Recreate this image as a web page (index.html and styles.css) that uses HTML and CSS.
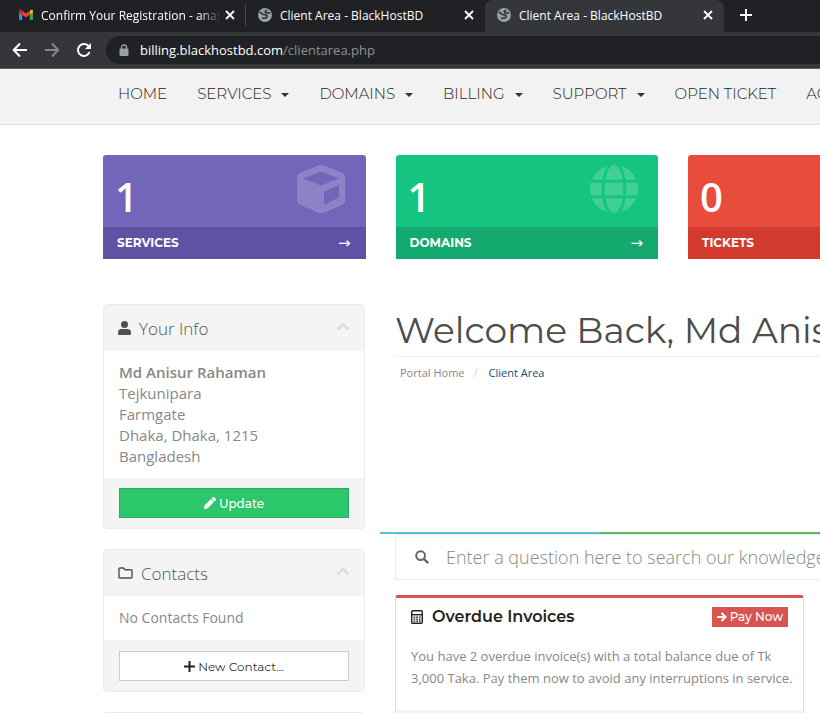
FILE: index.html
```html
<!DOCTYPE html>
<html lang="en">
<head>
<meta charset="utf-8">
<title>Client Area - BlackHostBD</title>
<link rel="stylesheet" href="styles.css">
</head>
<body>
<svg class="defs" aria-hidden="true">
  <symbol id="globe" viewBox="0 0 16 16"><circle cx="8" cy="8" r="7" fill="#9aa0a6"/><path d="M2.500 5.500C4 5 4.600 5.800 5.200 6.800c.6 1 1.500 1 2.600 1 1.400 0 2.200.5 2.200 1.500 0 1.300-1.400 1.900-2.500 1.900H5M13 5.500c-1 .7-2 .5-2.800.5C8.600 6 8 5.400 8.300 4.400 8.500 3.700 9.300 3.700 10 3" fill="none" stroke="#303135" stroke-width="1.600"/></symbol>
  <symbol id="close" viewBox="0 0 10 10"><path d="m1 1 8 8m0-8-8 8" fill="none" stroke="currentColor" stroke-width="1.800"/></symbol>
  <symbol id="chevron" viewBox="0 0 14 9"><path d="m1.500 7.500 5.500-5.500 5.500 5.500" fill="none" stroke="#dcdcdc" stroke-width="2.600"/></symbol>
</svg>

<div class="browser">
  <div class="tabs">
    <div class="tab tab-first">
      <svg class="favicon" viewBox="0 0 16 16"><path d="M1 4.500V12c0 .6.4 1 1 1h2.200V7.500z" fill="#4285f4"/><path d="M15 4.500V12c0 .6-.4 1-1 1h-2.200V7.500z" fill="#34a853"/><path d="M11.800 3.700v4l3.200-2.400V4c0-1.200-1.300-1.700-2.200-1z" fill="#fbbc04"/><path d="M1 5.300V4c0-1.200 1.300-1.700 2.200-1L8 6.600 11.800 3.700v4L8 10.600 4.200 7.700z" fill="#ea4335"/><path d="M1 5.300V4c0-1 .9-1.500 1.700-1.300L4.200 3.700v4z" fill="#c5221f"/></svg>
      <span class="tab-title fade">Confirm Your Registration - anasbd</span>
      <button class="icon-btn" aria-label="Close tab"><svg width="10" height="10"><use href="#close"/></svg></button>
    </div>
    <div class="tab">
      <svg class="favicon"><use href="#globe"/></svg>
      <span class="tab-title">Client Area - BlackHostBD</span>
      <button class="icon-btn" aria-label="Close tab"><svg width="10" height="10"><use href="#close"/></svg></button>
    </div>
    <div class="tab active">
      <svg class="favicon"><use href="#globe"/></svg>
      <span class="tab-title">Client Area - BlackHostBD</span>
      <button class="icon-btn" aria-label="Close tab"><svg width="10" height="10"><use href="#close"/></svg></button>
    </div>
    <button class="icon-btn new-tab" aria-label="New tab"><svg width="12" height="12" viewBox="0 0 12 12"><path d="M6 0v12M0 6h12" stroke="currentColor" stroke-width="2"/></svg></button>
  </div>
  <div class="toolbar">
    <button class="icon-btn" aria-label="Back"><svg width="16" height="16" viewBox="0 0 16 16"><path d="M15 8H2M8 1.500 1.700 8 8 14.500" fill="none" stroke="#fff" stroke-width="2"/></svg></button>
    <button class="icon-btn" aria-label="Forward"><svg width="16" height="16" viewBox="0 0 16 16"><path d="M1 8h13M8 1.500 14.300 8 8 14.500" fill="none" stroke="#85868a" stroke-width="2"/></svg></button>
    <button class="icon-btn" aria-label="Reload"><svg width="16" height="16" viewBox="0 0 16 16"><path d="M13.500 10.200A6 6 0 1 1 12.200 3.700L14 5.500" fill="none" stroke="#fff" stroke-width="2"/><path d="M15 1v6H9z" fill="#fff"/></svg></button>
    <div class="omnibox">
      <svg width="10" height="13" viewBox="0 0 10 13"><path d="M2.500 6V3.500a2.500 2.500 0 0 1 5 0V6" fill="none" stroke="#9aa0a6" stroke-width="1.400"/><rect x="0.500" y="4.500" width="9" height="7.500" rx="1" fill="#9aa0a6"/></svg>
      <span class="url"><b>billing.blackhostbd.com</b>/clientarea.php</span>
    </div>
  </div>
</div>

<nav class="site-nav">
  <a href="#">HOME</a>
  <a href="#" class="drop">SERVICES</a>
  <a href="#" class="drop">DOMAINS</a>
  <a href="#" class="drop">BILLING</a>
  <a href="#" class="drop">SUPPORT</a>
  <a href="#">OPEN TICKET</a>
  <a href="#">ACCOUNT</a>
</nav>

<div class="container">
  <section class="tiles">
    <a href="#" class="tile services">
      <span class="tile-top"><strong>1</strong>
        <svg width="50" height="50" viewBox="0 0 50 50"><path fill-rule="evenodd" d="M22.500 1.500a7 7 0 0 1 5 0l18 7Q49 10 49 13.500V36q0 3.500-3 5L28 48.500a7 7 0 0 1-6 0L4 41q-3-1.500-3-5V13.500Q1 10 4.500 8.500zM25 7.500 7 14.500 25 21.500 43 14.500zM28 27.500V41L43 33.500V21z"/></svg></span>
      <span class="tile-label">SERVICES<i>→</i></span>
    </a>
    <a href="#" class="tile domains">
      <span class="tile-top"><strong>1</strong>
        <svg width="48" height="50" viewBox="0 0 496 512"><path d="M336.500 160C322 70.700 287.800 8 248 8s-74 62.700-88.500 152h177zM152 256c0 22.200 1.200 43.500 3.300 64h185.300c2.100-20.500 3.300-41.800 3.300-64s-1.200-43.500-3.300-64H155.300c-2.100 20.500-3.300 41.800-3.300 64zm324.700-96c-28.600-67.900-86.500-120.400-158-141.600 24.400 33.800 41.200 84.700 50 141.600h108zM177.200 18.400C105.800 39.600 47.800 92.100 19.300 160h108c8.700-56.900 25.500-107.800 49.900-141.600zM487.400 192H372.700c2.100 21 3.300 42.500 3.300 64s-1.200 43-3.300 64h114.600c5.500-20.500 8.600-41.800 8.600-64s-3.100-43.500-8.500-64zM120 256c0-21.500 1.200-43 3.300-64H8.600C3.200 212.500 0 233.800 0 256s3.200 43.500 8.600 64h114.600c-2-21-3.200-42.500-3.200-64zm39.500 96c14.500 89.300 48.700 152 88.500 152s74-62.700 88.500-152h-177zm159.300 141.600c71.400-21.200 129.400-73.700 158-141.600h-108c-8.800 56.900-25.600 107.800-50 141.600zM19.300 352c28.600 67.900 86.500 120.400 158 141.600-24.400-33.800-41.200-84.700-50-141.600h-108z"/></svg></span>
      <span class="tile-label">DOMAINS<i>→</i></span>
    </a>
    <a href="#" class="tile tickets">
      <span class="tile-top"><strong>0</strong></span>
      <span class="tile-label">TICKETS</span>
    </a>
  </section>

  <div class="columns">
    <aside class="sidebar">
      <section class="panel">
        <h3><svg width="13" height="14" viewBox="0 0 13 14"><circle cx="6.500" cy="3.500" r="3.500" fill="#4d4f50"/><path d="M0 13v-1.500Q0 8 3.500 8h6Q13 8 13 11.500V13q0 1-1 1H1q-1 0-1-1z" fill="#4d4f50"/></svg>Your Info<svg class="chev" width="14" height="9"><use href="#chevron"/></svg></h3>
        <address class="panel-body"><strong>Md Anisur Rahaman</strong><br>Tejkunipara<br>Farmgate<br>Dhaka, Dhaka, 1215<br>Bangladesh</address>
        <div class="panel-foot"><button class="btn update"><svg width="12" height="12" viewBox="0 0 512 512"><path fill="#fff" d="M497.900 142.100l-46.100 46.100c-4.700 4.700-12.300 4.700-17 0l-111-111c-4.700-4.700-4.700-12.300 0-17l46.100-46.100c18.700-18.700 49.100-18.700 67.900 0l60.100 60.100c18.800 18.700 18.800 49.100 0 67.900zM284.200 99.800L21.600 362.400.4 483.900c-2.900 16.400 11.400 30.600 27.800 27.800l121.500-21.300 262.600-262.600c4.700-4.700 4.700-12.300 0-17l-111-111c-4.800-4.700-12.400-4.700-17.100 0z"/></svg>Update</button></div>
      </section>
      <section class="panel">
        <h3><svg width="15" height="12" viewBox="0 0 15 12"><path d="M1 2q0-1 1-1h3.500L7 2.700h6q1 0 1 1V10q0 1-1 1H2q-1 0-1-1z" fill="none" stroke="#4d4f50" stroke-width="1.400"/></svg>Contacts<svg class="chev" width="14" height="9"><use href="#chevron"/></svg></h3>
        <div class="panel-body short">No Contacts Found</div>
        <div class="panel-foot"><button class="btn contact"><svg width="11" height="11" viewBox="0 0 11 11"><path d="M5.500 0v11M0 5.500h11" stroke="#222" stroke-width="2"/></svg>New Contact...</button></div>
      </section>
      <section class="panel"><h3></h3></section>
    </aside>

    <main>
      <h1>Welcome Back, Md Anisur</h1>
      <ol class="crumbs"><li><a href="#">Portal Home</a></li><li><a href="#" class="current">Client Area</a></li></ol>
      <div class="stripe"><span></span><span></span><span></span><span></span></div>
      <label class="search">
        <svg width="14" height="14" viewBox="0 0 14 14"><circle cx="5.600" cy="5.600" r="4.400" fill="none" stroke="#666" stroke-width="2"/><path d="m9 9 4.200 4.200" stroke="#666" stroke-width="2.400"/></svg>
        <input type="text" aria-label="Search" placeholder="Enter a question here to search our knowledgebase for answers...">
      </label>
      <div class="cards">
        <section class="card">
          <header>
            <svg width="12" height="14" viewBox="0 0 12 14"><rect x="0.700" y="0.700" width="10.600" height="12.600" rx="1" fill="none" stroke="#222" stroke-width="1.400"/><path d="M1 4.700h10" stroke="#222" stroke-width="1.400"/><path d="M2.500 7.200h1.800m.9 0H7m.9 0h1.800M2.500 9.200h1.800m.9 0H7M2.500 11.200h1.800m.9 0H7m1.800-2.700v3.400" stroke="#222" stroke-width="1.200"/></svg>
            <h2>Overdue Invoices</h2>
            <a href="#" class="pay"><svg width="10" height="10" viewBox="0 0 10 10"><path d="M0 5h8M4.500 1 8.600 5 4.500 9" fill="none" stroke="#fff" stroke-width="2"/></svg>Pay Now</a>
          </header>
          <p>You have 2 overdue invoice(s) with a total balance due of Tk 3,000 Taka. Pay them now to avoid any interruptions in service.</p>
          <footer></footer>
        </section>
      </div>
    </main>
  </div>
</div>
</body>
</html>
```
FILE: styles.css
```css
* { box-sizing: border-box; }
body {
  margin: 0;
  overflow: hidden;
  background: #fff;
  color: #888;
  font-family: "Open Sans", sans-serif;
  font-size: 15px;
}
a { color: inherit; text-decoration: none; }
button { font: inherit; cursor: pointer; }
svg { flex: none; }
.defs { display: none; }

/* browser chrome */
.browser { background: #35363a; border-bottom: 1px solid #5c5d60; }
.tabs { display: flex; height: 32px; background: #202124; color: #fff; font-size: 12px; }
.tab { display: flex; align-items: center; flex: 0 0 239px; min-width: 0; padding: 0 11px 2px 11px; }
.tab-first { flex-basis: 246px; padding: 0 10px 2px 18px; border-right: 1px solid #4a4c50; border-image: linear-gradient(transparent 5px, #4a4c50 5px 25px, transparent 25px) 1; }
.tab.active { background: #35363a; border-radius: 8px 8px 0 0; }
.favicon { width: 16px; height: 16px; margin-right: 7px; }
.tab-title { flex: 1; min-width: 0; overflow: hidden; white-space: nowrap; }
.tab-title.fade { margin-right: 4px; mask-image: linear-gradient(to right, #000 88%, transparent); }
.icon-btn { display: flex; align-items: center; justify-content: center; padding: 0; border: 0; background: none; color: #fff; }
.new-tab { margin-left: 16px; padding-bottom: 2px; }
.toolbar { display: flex; align-items: center; gap: 16px; height: 36px; padding-left: 12px; }
.omnibox {
  display: flex; align-items: center; gap: 11px; flex: 1;
  height: 28px; margin-left: -2px; padding-left: 13px;
  border-radius: 14px 0 0 14px; background: #202124;
}
.url { color: #8e9196; font-size: 13px; }
.url b { color: #fff; font-weight: 400; }

/* site navigation */
.site-nav {
  display: flex; align-items: flex-start; gap: 30px; height: 56px; padding: 14px 0 0 118px;
  background: #f2f2f2; border-bottom: 1px solid #ddd; color: #222;
  font: 300 15px/22px Montserrat, Inter, sans-serif; white-space: nowrap;
}
.drop { display: flex; align-items: center; }
.drop::after { content: ""; margin: 2px 0 0 10px; border: 4px solid transparent; border-top-color: #333; border-bottom: 0; }

/* page */
.container { min-width: 1243px; padding: 30px 0 0 103px; }
.tiles { display: grid; grid-template-columns: repeat(4, 1fr); gap: 30px; }
.tile { border-radius: 3px 3px 0 0; overflow: hidden; color: #fff; }
.tile-top { display: flex; justify-content: space-between; height: 72px; padding: 9px 20px 0 12px; }
.tile-top strong { padding-top: 6px; font-size: 40px; font-weight: 600; line-height: 54px; }
.tile-top svg { fill: #fff; opacity: .19; }
.tile-label { display: flex; justify-content: space-between; padding: 0 15px 0 14px; font: 700 12px/32px Montserrat, Inter, sans-serif; }
.tile-label i { font: 400 15px/32px "DejaVu Sans", sans-serif; }
.services { background: #7266ba; }
.services .tile-label { background: #5e52a4; }
.domains { background: #15c480; }
.domains .tile-label { background: #13a96f; }
.tickets { background: #e84c3d; }
.tickets .tile-label { background: #d23a2d; }

.columns { display: grid; grid-template-columns: 262px 1fr; gap: 30px; margin-top: 45px; }
.panel { margin-bottom: 20px; border: 1px solid #eaeaea; border-radius: 4px; }
.panel h3 {
  display: flex; align-items: center; gap: 8px; height: 46px; margin: 0; padding: 0 14px;
  background: #f4f4f4; color: #555; font-size: 17px; font-weight: 300;
}
.chev { margin: 0 0 3px auto; }
.panel-body { padding: 11px 15px; font-size: 15px; font-style: normal; line-height: 21px; }
.panel-body strong { font-weight: 600; }
.panel-body.short { font-size: 14px; line-height: 22px; }
.panel-foot { padding: 10px 15px; background: #f4f4f4; }
.short + .panel-foot { padding-top: 11px; }
.btn {
  display: flex; align-items: center; justify-content: center; gap: 3px;
  width: 100%; height: 30px; padding: 0; border: 1px solid #ccc; background: #fff;
  font-family: Montserrat, Inter, sans-serif; font-size: 12px;
}
.update { border-color: #27ae60; background: #2cc76a; color: #fff; font-weight: 500; }
.contact { color: #333; }

h1 {
  margin: 0; border-bottom: 1px solid #eee; color: #4d4d4d;
  font: 400 36px/52px Montserrat, Inter, sans-serif; white-space: nowrap;
}
.crumbs { display: flex; margin: 0 0 151px; padding: 8px 5px 0; list-style: none; font-size: 11px; line-height: 16px; }
.crumbs li + li::before { content: "/"; padding: 0 11px 0 9px; color: #ccc; }
.crumbs .current { color: #0d4f82; }
.stripe { display: grid; grid-template-columns: repeat(4, 1fr); height: 2px; margin: 0 -15px; }
.stripe span { background: #5bc0de; }
.stripe span:nth-child(2) { background: #5cb85c; }
.stripe span:nth-child(3) { background: #d9534f; }
.stripe span:nth-child(4) { background: #f0ad4e; }
.search { display: flex; align-items: center; gap: 17px; height: 46px; padding-left: 19px; border: 1px solid #eaeaea; }
.search input { flex: 1; padding: 0; border: 0; outline: 0; font: 300 18px "Open Sans", sans-serif; }
.search input::placeholder { color: #888; }
.cards { display: grid; grid-template-columns: 1fr 1fr; gap: 30px; margin-top: 15px; }
.card { border: 1px solid #ddd; border-top: 3px solid #d9534f; border-radius: 3px; }
.card header { display: flex; align-items: center; gap: 9px; padding: 9px 15px 0; }
.card h2 { margin: 0; color: #222; font: 600 16px/20px Montserrat, Inter, sans-serif; }
.pay { display: flex; align-items: center; gap: 3px; margin-left: auto; padding: 0 5px; background: #d9534f; color: #fff; font: 500 12px/20px Montserrat, Inter, sans-serif; }
.card p { margin: 18px 8px 21px 15px; font-size: 13px; line-height: 22px; }
.card footer { height: 40px; background: #f4f4f4; }
```
